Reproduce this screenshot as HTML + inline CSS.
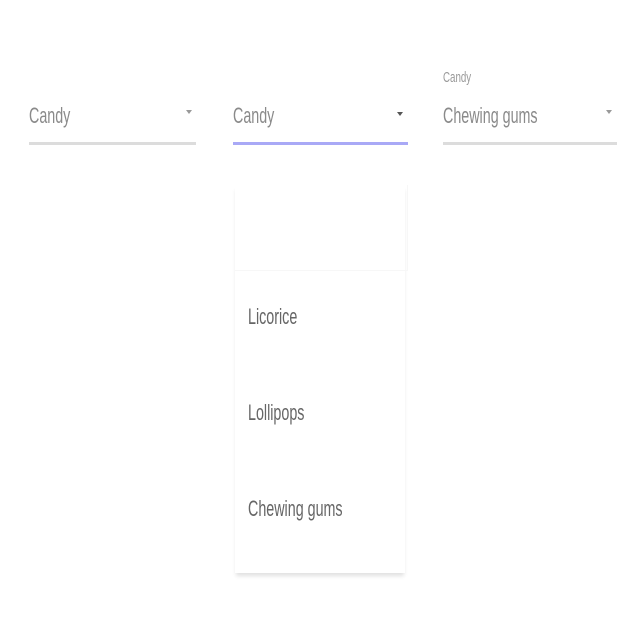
<!DOCTYPE html>
<html><head><style>
body{margin:0;width:640px;height:640px;background:#fff;position:relative;overflow:hidden;font-family:"Liberation Sans",sans-serif;}
.t{position:absolute;color:#8a8a8a;font-size:22px;transform:scaleX(0.65);transform-origin:left center;white-space:nowrap;line-height:1;}
.l{position:absolute;height:3px;}
.a{position:absolute;width:0;height:0;border-left:3px solid transparent;border-right:3px solid transparent;border-top:4px solid #999;}
</style></head><body>
<div class="t" style="left:29px;top:105px">Candy</div>
<div class="a" style="left:186px;top:110px"></div>
<div class="l" style="left:29px;top:142px;width:167px;background:#dcdcdc"></div>

<div class="t" style="left:233px;top:105px">Candy</div>
<div class="a" style="left:397px;top:112px;border-top-color:#555"></div>
<div class="l" style="left:233px;top:142px;width:175px;background:#a9a9f6"></div>

<div class="t" style="left:443px;top:70px;font-size:15px;color:#999">Candy</div>
<div class="t" style="left:443px;top:105px">Chewing gums</div>
<div class="a" style="left:606px;top:110px"></div>
<div class="l" style="left:443px;top:142px;width:174px;background:#dcdcdc"></div>

<div style="position:absolute;left:235px;top:185px;width:170px;height:388px;background:#fff;box-shadow:0 4px 4px -1px rgba(0,0,0,0.12)"></div>
<div style="position:absolute;left:235px;top:185px;width:172px;height:85px;border-right:1px solid #f7f7f7;border-bottom:1px solid #f7f7f7"></div>
<div class="t" style="left:248px;top:306px;color:#666">Licorice</div>
<div class="t" style="left:248px;top:402px;color:#666">Lollipops</div>
<div class="t" style="left:248px;top:498px;color:#666">Chewing gums</div>
</body></html>
